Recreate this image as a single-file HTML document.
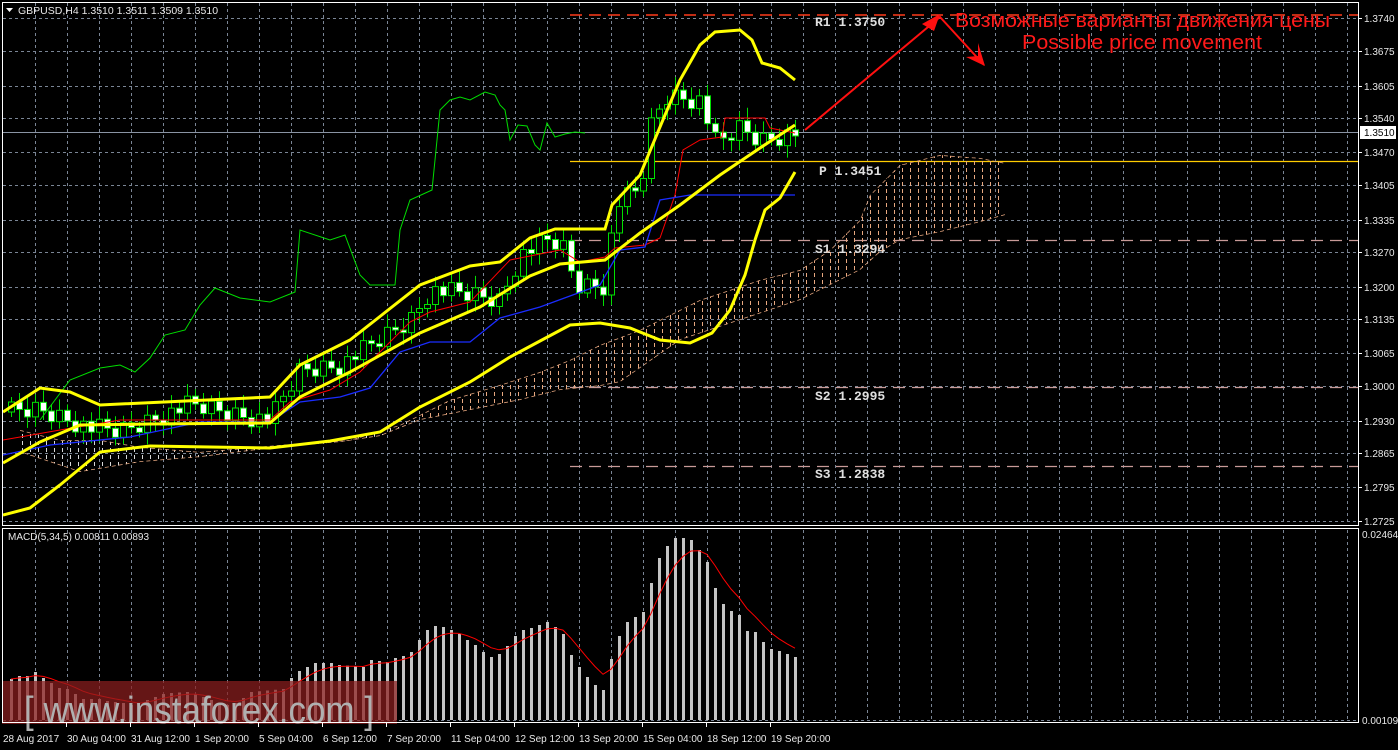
<!DOCTYPE html>
<html><head><meta charset="utf-8"><style>
html,body{margin:0;padding:0;background:#000;width:1398px;height:750px;overflow:hidden}
svg{display:block}
</style></head><body>
<svg id="s" width="1398" height="750" xmlns="http://www.w3.org/2000/svg" font-family="Liberation Sans, sans-serif">
<defs>
<clipPath id="mainclip"><rect x="3" y="3" width="1355" height="522"/></clipPath>
<clipPath id="cloudclip"><polygon id="cloudpoly" points=""/></clipPath>
</defs>
<rect width="1398" height="750" fill="#000"/>
<g id="grid"></g>
<g id="cloud" clip-path="url(#cloudclip)"></g>
<g id="lines" clip-path="url(#mainclip)"></g>
<g id="macd"></g>
<g id="axis"></g>
</svg>
<script>
var NS="http://www.w3.org/2000/svg";
function el(p,t,a,txt){var e=document.createElementNS(NS,t);for(var k in a)e.setAttribute(k,a[k]);if(txt!==undefined)e.textContent=txt;p.appendChild(e);return e;}
function lerp(pts,x){if(x<=pts[0][0])return pts[0][1];for(var i=1;i<pts.length;i++){if(x<=pts[i][0]){var a=pts[i-1],b=pts[i];return a[1]+(b[1]-a[1])*(x-a[0])/(b[0]-a[0]);}}return pts[pts.length-1][1];}
function pl(p,pts,c,w,extra){var a={points:pts.map(function(q){return q[0]+","+q[1]}).join(" "),fill:"none",stroke:c,"stroke-width":w};for(var k in extra)a[k]=extra[k];return el(p,"polyline",a);}
var S=document.getElementById("s"),G=document.getElementById("grid"),L=document.getElementById("lines"),M=document.getElementById("macd"),A=document.getElementById("axis");
var hy=[18,51,86,118,152,185,220,252,287,319,353,386,421,453,487,521];
for(var x=35;x<1358;x+=32){el(G,"line",{x1:x+.5,y1:3,x2:x+.5,y2:525,stroke:"#7a8595","stroke-dasharray":"3,3"});el(G,"line",{x1:x+.5,y1:530,x2:x+.5,y2:721,stroke:"#7a8595","stroke-dasharray":"3,3"});}
hy.forEach(function(y){el(G,"line",{x1:3,y1:y+.5,x2:1358,y2:y+.5,stroke:"#7a8595","stroke-dasharray":"3,3"});});
el(G,"line",{x1:3,y1:720.5,x2:1358,y2:720.5,stroke:"#7a8595","stroke-dasharray":"3,3"});
el(G,"line",{x1:3,y1:132.5,x2:1358,y2:132.5,stroke:"#8a94a4"});
el(G,"line",{x1:570,y1:15,x2:1358,y2:15,stroke:"#ff3a1a","stroke-width":1.5,"stroke-dasharray":"12,7"});
el(G,"line",{x1:570,y1:161.5,x2:1358,y2:161.5,stroke:"#ffcc00","stroke-width":1.3});
[240,387,466].forEach(function(y){el(G,"line",{x1:570,y1:y+.5,x2:1358,y2:y+.5,stroke:"#c89a98","stroke-width":1.3,"stroke-dasharray":"12,7"});});
var lbl=[["R1 1.3750",815,26],["P 1.3451",819,175],["S1 1.3294",815,253],["S2 1.2995",815,400],["S3 1.2838",815,478]];
lbl.forEach(function(l){el(G,"text",{x:l[1],y:l[2],fill:"#e0e0e0","font-size":"13","font-weight":"bold","font-family":"Liberation Mono, monospace"},l[0]);});
var cu=[[20,430],[60,440],[100,440],[140,447],[200,452],[280,445],[350,440],[400,425],[450,400],[500,385],[540,372],[570,360],[600,345],[640,330],[700,300],[760,280],[800,270],[830,250],[860,220],[870,195],[880,185],[900,165],[940,155],[980,158],[1005,163]];
var cl=[[1005,215],[980,222],[940,232],[900,240],[880,252],[860,270],[800,300],[740,320],[680,340],[620,382],[600,386],[560,390],[520,400],[470,410],[420,420],[380,436],[340,442],[280,447],[200,457],[140,462],[80,472],[20,452]];
document.getElementById("cloudpoly").setAttribute("points",cu.concat(cl).map(function(q){return q.join(",")}).join(" "));
var C=document.getElementById("cloud");
for(var x=22;x<1005;x+=8){el(C,"line",{x1:x+.5,y1:140,x2:x+.5,y2:480,stroke:x<420?"#d8d8d8":"#e8a880","stroke-dasharray":"4,3","stroke-width":1});}
pl(C,cu,"#e8a880",1.5,{"stroke-dasharray":"4,3"});
pl(C,cl,"#e8a880",1.5,{"stroke-dasharray":"4,3"});
var cp=[[11,412],[40,410],[70,420],[90,428],[120,432],[150,420],[190,405],[240,415],[270,420],[300,370],[340,365],[380,340],[410,320],[430,290],[470,295],[500,300],[520,255],[550,240],[565,250],[575,285],[605,285],[615,205],[640,190],[652,120],[668,95],[700,100],[716,145],[740,128],[760,140],[795,132]];
var prev=lerp(cp,3);
for(var i=0;i<99;i++){var x=11+8*i;var c=lerp(cp,x)+((i*37)%11-5)*2;var o=prev;prev=c;var hi=Math.min(o,c)-5-(i*13)%9,lo=Math.max(o,c)+5+(i*7)%8;
el(L,"line",{x1:x+.5,y1:hi,x2:x+.5,y2:lo,stroke:"#00e000"});
var t=Math.min(o,c),h=Math.max(2,Math.abs(c-o));
el(L,"rect",{x:x-2.5,y:t,width:6,height:h,fill:c>o?"#fff":"#000",stroke:"#00e000"});}
pl(L,[[40,420],[70,380],[100,368],[120,365],[135,372],[150,358],[165,335],[185,330],[200,305],[215,288],[240,298],[270,302],[295,292],[300,230],[330,240],[345,235],[360,275],[370,285],[395,285],[400,230],[410,200],[432,190],[440,110],[450,100],[460,97],[470,100],[485,92],[495,95],[500,105],[505,110],[510,140],[518,125],[527,126],[535,145],[540,150],[547,123],[555,137],[565,134],[575,132],[585,133]],"#00dd00",1);
pl(L,[[3,440],[60,430],[120,420],[200,420],[270,420],[290,402],[330,390],[360,372],[380,352],[410,322],[430,312],[470,302],[510,260],[560,250],[580,262],[605,257],[615,248],[645,245],[660,238],[675,195],[683,150],[700,140],[722,137],[725,118],[765,118],[770,128],[795,133]],"#ff0000",1);
pl(L,[[3,455],[50,445],[130,437],[200,422],[270,422],[300,402],[340,397],[370,388],[400,352],[430,342],[470,342],[500,318],[540,307],[600,285],[620,250],[645,247],[660,200],[690,195],[795,195]],"#1a2cff",1.3);
pl(L,[[3,412],[40,388],[70,392],[100,405],[270,397],[300,365],[350,340],[420,285],[470,266],[500,262],[530,238],[555,229],[605,229],[612,205],[640,175],[665,115],[680,80],[700,45],[715,32],[740,30],[752,40],[762,63],[780,68],[795,80]],"#ffff00",3);
pl(L,[[3,463],[40,442],[80,425],[150,424],[270,423],[300,397],[350,372],[420,333],[480,307],[530,276],[560,264],[605,260],[640,233],[680,205],[720,175],[760,148],[795,125]],"#ffff00",3);
pl(L,[[3,515],[30,508],[60,485],[100,452],[150,446],[270,448],[330,441],[380,432],[420,407],[470,382],[510,357],[540,341],[570,325],[600,323],[630,328],[660,340],[690,343],[712,333],[730,310],[745,275],[755,240],[765,210],[780,198],[795,172]],"#ffff00",3);
pl(L,[[805,130],[940,17],[984,65]],"#ff1010",2);
el(L,"polygon",{points:"940,14 922,24 934,31",fill:"#ff1010"});
el(L,"polygon",{points:"985,66 966,57 978,56 978,43",fill:"#ff1010"});
el(L,"text",{x:955,y:27,fill:"#ff1a1a","font-size":"20",textLength:375,lengthAdjust:"spacingAndGlyphs"},"Возможные варианты движения цены");
el(L,"text",{x:1022,y:49,fill:"#ff1a1a","font-size":"20",textLength:240,lengthAdjust:"spacingAndGlyphs"},"Possible price movement");
var mv=[[11,679],[19,676],[27,676],[35,672],[43,678],[51,683],[59,688],[67,689],[75,694],[83,699],[99,699],[107,701],[115,702],[123,703],[131,705],[139,706],[147,700],[155,697],[163,694],[171,693],[187,692],[195,694],[203,697],[211,700],[219,703],[227,705],[235,703],[243,698],[251,692],[283,689],[291,678],[299,671],[307,667],[315,663],[331,663],[339,665],[363,667],[371,660],[387,662],[395,658],[403,656],[411,652],[419,640],[427,630],[435,626],[443,627],[451,630],[459,634],[467,640],[475,645],[483,652],[491,657],[499,654],[507,646],[515,636],[523,630],[531,628],[539,625],[547,622],[555,627],[563,634],[571,655],[579,667],[587,677],[595,685],[603,690],[611,659],[619,636],[627,622],[635,617],[643,612],[651,583],[659,558],[667,546],[675,538],[683,538],[691,540],[699,550],[707,562],[715,588],[723,604],[731,611],[739,615],[747,631],[755,632],[763,642],[771,649],[779,651],[787,654],[795,657]];
var vals=[];for(var i=0;i<99;i++){var x=11+8*i;var y=lerp(mv,x);vals.push(y);el(M,"rect",{x:x-1,y:y,width:3,height:720-y,fill:"#c4c4c4"});}
var sig=[];var e=vals[0];for(var i=0;i<99;i++){e=e+(vals[i]-e)*0.33;sig.push([11+8*i,e.toFixed(1)]);}
pl(M,sig,"#ff0000",1);
el(M,"text",{x:8,y:540,fill:"#e8e8e8","font-size":"10"},"MACD(5,34,5) 0.00811 0.00893");
el(M,"rect",{x:2,y:681,width:395,height:43,fill:"rgba(140,30,30,0.72)"});
el(M,"text",{x:24,y:723,fill:"#b0b0b0","font-size":"38",textLength:350,lengthAdjust:"spacingAndGlyphs"},"[ www.instaforex.com ]");
el(A,"rect",{x:2.5,y:2.5,width:1356,height:523,fill:"none",stroke:"#fff"});
el(A,"rect",{x:2.5,y:528.5,width:1356,height:194,fill:"none",stroke:"#fff"});
var pv=["1.3740","1.3675","1.3605","1.3540","1.3470","1.3405","1.3335","1.3270","1.3200","1.3135","1.3065","1.3000","1.2930","1.2865","1.2795","1.2725"];
hy.forEach(function(y,i){el(A,"line",{x1:1358,y1:y+.5,x2:1362,y2:y+.5,stroke:"#fff"});el(A,"text",{x:1364,y:y+4,fill:"#e8e8e8","font-size":"10"},pv[i]);});
el(A,"rect",{x:1360,y:126,width:36,height:13,fill:"#fff"});
el(A,"text",{x:1364,y:136,fill:"#000","font-size":"10"},"1.3510");
el(A,"text",{x:1362,y:538,fill:"#e8e8e8","font-size":"10"},"0.02464");
el(A,"text",{x:1362,y:724,fill:"#e8e8e8","font-size":"10"},"0.00109");
var tl=["28 Aug 2017","30 Aug 04:00","31 Aug 12:00","1 Sep 20:00","5 Sep 04:00","6 Sep 12:00","7 Sep 20:00","11 Sep 04:00","12 Sep 12:00","13 Sep 20:00","15 Sep 04:00","18 Sep 12:00","19 Sep 20:00"];
tl.forEach(function(t,i){var x=3+64*i;if(i>0)el(A,"line",{x1:x-0.5,y1:722,x2:x-0.5,y2:727,stroke:"#fff"});el(A,"text",{x:x,y:742,fill:"#e8e8e8","font-size":"10"},t);});
el(A,"text",{x:18,y:14,fill:"#e8e8e8","font-size":"10.5"},"GBPUSD,H4  1.3510 1.3511 1.3509 1.3510");
el(A,"polygon",{points:"6,8 13,8 9.5,12",fill:"#fff"});
</script>
</body></html>
